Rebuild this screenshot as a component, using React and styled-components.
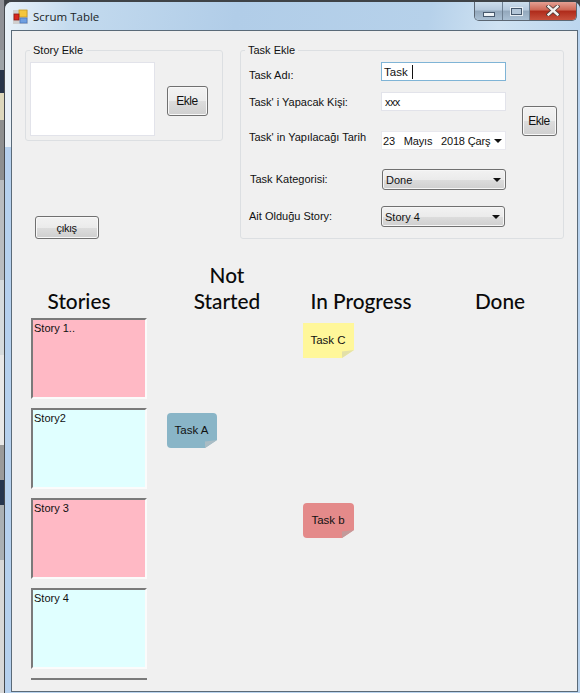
import React from "react";
import styled, { createGlobalStyle } from "styled-components";

const Global = createGlobalStyle`
  html, body { margin: 0; padding: 0; background: #f0f0f0; }
  body { width: 580px; height: 693px; overflow: hidden; font-family: "Liberation Sans", Arial, sans-serif; font-size: 11px; color: #111; }
  #root { height: 693px; }
`;

const Page = styled.div`
  display: flex;
  width: 580px;
  height: 693px;
  overflow: hidden;
  background: #3f4347;
`;
const DesktopEdge = styled.div`
  width: 4px;
  flex: none;
  border-right: 1px solid #45494e;
  background: linear-gradient(to bottom,
    #8f9196 0 50px, #9da3a8 50px 70px, #26344a 70px 93px, #ddd8bd 93px 120px, #8d8f90 120px 180px,
    #b9bcc0 180px 280px, #d6dbdd 280px 355px, #e8e8e8 355px 445px, #9a9a9a 445px 480px,
    #26364f 480px 505px, #aab0b4 505px 560px, #d8d8d8 560px 693px);
`;
const Win = styled.div`
  flex: 1;
  display: flex;
  flex-direction: column;
  margin-top: 2px;
  border-top-left-radius: 7px;
  border-top-right-radius: 7px;
  overflow: hidden;
  background: linear-gradient(to bottom, #e9f1f8 0 145px, #b5d0ee 145px) left top / 7px 100% no-repeat, #b9d3ee;
`;
const TitleBar = styled.div`
  height: 28px;
  flex: none;
  display: flex;
  align-items: flex-start;
  padding: 0 3px 0 8px;
  background: linear-gradient(100deg, #e9f2f9 0, #c3daee 70px, #b1cde8 230px, #b6d1ea 420px, #cfe2f2 490px, #bcd6ee 100%);
`;
const AppIcon = styled.svg`
  width: 15px;
  height: 15px;
  flex: none;
  margin-top: 7px;
`;
const Title = styled.span`
  margin: 6px 0 0 5px;
  font: 11.5px/17px "Open Sans", "Noto Sans", sans-serif;
  color: #1a1f26;
`;
const Controls = styled.div`
  display: flex;
  height: 19px;
  margin-left: auto;
  margin-top: -1px;
  border: 1px solid #5b6672;
  border-top: none;
  border-radius: 0 0 5px 5px;
  overflow: hidden;
`;
const Ctl = styled.div`
  width: ${(p) => p.$w}px;
  box-sizing: border-box;
  display: flex;
  align-items: center;
  justify-content: center;
  border-right: ${(p) => (p.$close ? "none" : "1px solid #6d7f91")};
  background: ${(p) =>
    p.$close
      ? "linear-gradient(to bottom, #e8a79b 0, #cf6a58 45%, #b02c1c 55%, #c7503c 100%)"
      : "linear-gradient(to bottom, #cfe0ee 0, #b6cadd 45%, #94a9bd 55%, #a9bfd3 100%)"};
`;
const MinGlyph = styled.i`
  display: block;
  width: 10px;
  height: 3px;
  margin-top: 7px;
  background: #eef3f7;
  border: 1px solid #46586c;
`;
const MaxGlyph = styled.i`
  display: block;
  width: 9px;
  height: 5px;
  margin-top: 1px;
  background: #b3c6d8;
  border: 1px solid #46586c;
  box-shadow: 0 0 0 1px #e6edf3;
`;
const CloseGlyph = styled.svg`
  width: 14px;
  height: 11px;
`;
const Client = styled.div`
  flex: 1;
  margin: 0 2px 1px 6px;
  border: 1px solid #5a6a78;
  background: #f0f0f0;
  min-height: 0;
`;
const TopArea = styled.div`
  display: flex;
  gap: 17px;
  padding: 13px 0 0 13px;
`;
const LeftColumn = styled.div`
  width: 198px;
  flex: none;
`;
const Group = styled.fieldset`
  margin: 0;
  min-width: 0;
  box-sizing: border-box;
  width: ${(p) => p.$w}px;
  height: ${(p) => p.$h}px;
  padding: 6px 4px 0 ${(p) => p.$pl}px;
  border: 1px solid #dcdfe2;
  border-radius: 3px;
`;
const Legend = styled.legend`
  margin-left: ${(p) => p.$ml}px;
  padding: 0 3px;
  height: 12px;
  font-size: 11px;
  line-height: 12px;
`;
const StoryRow = styled.div`
  display: flex;
  gap: 12px;
  align-items: flex-start;
`;
const TextArea = styled.div`
  width: 125px;
  height: 74px;
  box-sizing: border-box;
  background: #fff;
  border: 1px solid #e2e3ea;
`;
const Button = styled.div`
  width: ${(p) => p.$w}px;
  height: ${(p) => p.$h}px;
  flex: none;
  box-sizing: border-box;
  display: flex;
  align-items: center;
  justify-content: center;
  margin: ${(p) => p.$m || 0};
  padding-right: 1px;
  border: 1px solid #707070;
  border-radius: 3px;
  box-shadow: inset 0 0 0 1px #f8f8f8;
  background: linear-gradient(to bottom, #f2f2f2 0, #ebebeb 50%, #dddddd 50%, #cfcfcf 100%);
  font-size: ${(p) => p.$fs || 11}px;
  letter-spacing: -0.5px;
`;
const TaskBody = styled.div`
  display: flex;
  gap: 16px;
  align-items: flex-start;
`;
const Fields = styled.div`
  width: 257px;
  flex: none;
`;
const FormRow = styled.div`
  display: flex;
  align-items: flex-start;
  margin-top: ${(p) => p.$top}px;
  padding-left: ${(p) => p.$nudge || 0}px;
`;
const Label = styled.span`
  width: 132px;
  flex: none;
  margin-top: ${(p) => p.$dy}px;
  margin-bottom: -4px;
  font-size: 11px;
  line-height: 14px;
  white-space: nowrap;
`;
const TextField = styled.div`
  width: 125px;
  height: 19px;
  box-sizing: border-box;
  display: flex;
  align-items: center;
  padding-left: ${(p) => (p.$focus ? 2 : 3)}px;
  background: #fff;
  border: 1px solid ${(p) => (p.$focus ? "#7fb4d6" : "#e2e3ea")};
  font-size: ${(p) => (p.$focus ? 11.5 : 11)}px;
  white-space: pre;
  letter-spacing: ${(p) => (p.$focus ? 0 : -0.6)}px;
`;
const Caret = styled.i`
  display: block;
  width: 1px;
  height: 14px;
  margin-left: 1px;
  background: #111;
`;
const DateField = styled.div`
  width: 125px;
  height: 19px;
  box-sizing: border-box;
  display: flex;
  align-items: center;
  padding: 0 3px 0 1px;
  background: #fff;
  border: 1px solid #e8e8ee;
  font-size: 11px;
`;
const DateText = styled.span`
  flex: none;
  white-space: pre;
  letter-spacing: -0.15px;
`;
const Arrow = styled.i`
  display: block;
  flex: none;
  width: 0;
  height: 0;
  margin-left: auto;
  border-left: 4px solid transparent;
  border-right: 4px solid transparent;
  border-top: 4px solid #111;
`;
const Combo = styled.div`
  width: ${(p) => p.$w || 124}px;
  height: 21px;
  box-sizing: border-box;
  display: flex;
  align-items: center;
  padding: 0 4px 0 3px;
  border: 1px solid #707070;
  border-radius: 3px;
  box-shadow: inset 0 0 0 1px #f6f6f6;
  background: linear-gradient(to bottom, #f2f2f2 0, #ebebeb 50%, #dddddd 50%, #cfcfcf 100%);
  font-size: 11px;
`;
const HeadGrid = styled.div`
  display: grid;
  grid-template-columns: repeat(4, 136px);
  align-items: end;
  padding-left: 19px;
  margin-top: 23px;
`;
const ColHead = styled.div`
  width: ${(p) => p.$w}px;
  margin-left: ${(p) => p.$ml}px;
  font: 500 20.8px/26px "Lato", "DejaVu Sans", sans-serif;
  color: #0a0a0a;
  text-align: center;
  white-space: ${(p) => (p.$wrap ? "normal" : "nowrap")};
`;
const Board = styled.div`
  display: grid;
  grid-template-columns: repeat(4, 136px);
  grid-auto-rows: 81px;
  row-gap: 9px;
  padding-left: 19px;
  margin-top: 4px;
`;
const StoryCard = styled.div`
  width: 116px;
  height: 81px;
  box-sizing: border-box;
  grid-column: 1;
  padding: 2px 0 0 1px;
  background: ${(p) => p.$bg};
  border: 2px solid #7a7a7a;
  border-right-color: #fbfbfb;
  border-bottom-color: #fbfbfb;
  font-size: 11px;
  line-height: 13px;
`;
const StubCard = styled.div`
  width: 116px;
  height: 2px;
  grid-column: 1;
  background: #7a7a7a;
`;
const Note = styled.div`
  position: relative;
  grid-column: ${(p) => p.$col};
  grid-row: ${(p) => p.$row};
  align-self: start;
  box-sizing: border-box;
  width: ${(p) => p.$w}px;
  height: 35px;
  margin-top: 5px;
  padding: 10px 1px 0 0;
  text-align: center;
  font-size: 11.5px;
  line-height: 14px;
  background: ${(p) => p.$bg};
  border-radius: ${(p) => (p.$sharp ? "0" : "4px")};

  &::before {
    content: "";
    position: absolute;
    right: 0;
    bottom: 0;
    width: 12px;
    height: 8px;
    background: #f0f0f0;
    clip-path: polygon(100% 0, 100% 100%, 0 100%);
  }
  &::after {
    content: "";
    position: absolute;
    right: 0;
    bottom: 0;
    width: 12px;
    height: 8px;
    background: ${(p) => p.$fold};
    clip-path: polygon(100% 0, 0 100%, 0 20%);
  }
`;

const stories = [
  ["Story 1..", "#ffb9c5"],
  ["Story2", "#e0ffff"],
  ["Story 3", "#ffb9c5"],
  ["Story 4", "#e0ffff"],
];

export default function App() {
  return (
    <Page>
      <Global />
      <DesktopEdge />
      <Win>
        <TitleBar>
          <AppIcon viewBox="0 0 15 15">
            <rect x="0" y="1" width="15" height="14" fill="#cfcfcf" />
            <rect x="6" y="1" width="8" height="7" fill="#f4c63c" stroke="#c89a20" strokeWidth="0.8" />
            <rect x="7" y="9" width="7" height="5" fill="#6f9fe0" stroke="#4a78bd" strokeWidth="0.8" />
            <rect x="1" y="5" width="5" height="6" fill="#d9261c" stroke="#8c1a14" strokeWidth="0.8" />
          </AppIcon>
          <Title>Scrum Table</Title>
          <Controls>
            <Ctl $w={28}><MinGlyph /></Ctl>
            <Ctl $w={27}><MaxGlyph /></Ctl>
            <Ctl $w={46} $close>
              <CloseGlyph viewBox="0 0 14 11">
                <path d="M2.5 1.5 L11.5 9.5 M11.5 1.5 L2.5 9.5" stroke="#4d3a38" strokeWidth="4" strokeLinecap="square" />
                <path d="M2.5 1.5 L11.5 9.5 M11.5 1.5 L2.5 9.5" stroke="#f4f1ee" strokeWidth="2.4" strokeLinecap="square" />
              </CloseGlyph>
            </Ctl>
          </Controls>
        </TitleBar>
        <Client>
          <TopArea>
            <LeftColumn>
              <Group $w={198} $h={97} $pl={4}>
                <Legend $ml={0}>Story Ekle</Legend>
                <StoryRow>
                  <TextArea />
                  <Button $w={41} $h={30} $m="24px 0 0 0" $fs={12}>Ekle</Button>
                </StoryRow>
              </Group>
              <Button $w={64} $h={23} $m="75px 0 0 10px">çıkış</Button>
            </LeftColumn>
            <Group $w={324} $h={195} $pl={8}>
              <Legend $ml={-4}>Task Ekle</Legend>
              <TaskBody>
                <Fields>
                  <FormRow $top={0}>
                    <Label $dy={6}>Task Adı:</Label>
                    <TextField $focus>Task <Caret /></TextField>
                  </FormRow>
                  <FormRow $top={11}>
                    <Label $dy={3}>Task' i Yapacak Kişi:</Label>
                    <TextField>xxx</TextField>
                  </FormRow>
                  <FormRow $top={20}>
                    <Label $dy={-1}>Task' in Yapılacağı Tarih</Label>
                    <DateField>
                      <DateText>{"23   Mayıs   2018 Çarş"}</DateText>
                      <Arrow />
                    </DateField>
                  </FormRow>
                  <FormRow $top={19} $nudge={1}>
                    <Label $dy={3}>Task Kategorisi:</Label>
                    <Combo>Done<Arrow /></Combo>
                  </FormRow>
                  <FormRow $top={16}>
                    <Label $dy={3}>Ait Olduğu Story:</Label>
                    <Combo>Story 4<Arrow /></Combo>
                  </FormRow>
                </Fields>
                <Button $w={35} $h={30} $m="44px 0 0 0" $fs={12}>Ekle</Button>
              </TaskBody>
            </Group>
          </TopArea>
          <HeadGrid>
            <ColHead $w={96} $ml={0}>Stories</ColHead>
            <ColHead $w={100} $ml={10} $wrap>Not Started</ColHead>
            <ColHead $w={116} $ml={0}>In Progress</ColHead>
            <ColHead $w={100} $ml={11}>Done</ColHead>
          </HeadGrid>
          <Board>
            {stories.map(([text, bg]) => (
              <StoryCard key={text} $bg={bg}>{text}</StoryCard>
            ))}
            <StubCard />
            <Note $col={3} $row={1} $w={51} $bg="#fff79a" $fold="#e3e0a8" $sharp>Task C</Note>
            <Note $col={2} $row={2} $w={50} $bg="#89b5c7" $fold="#aabcc4">Task A</Note>
            <Note $col={3} $row={3} $w={51} $bg="#e48a8a" $fold="#c39a9a">Task b</Note>
          </Board>
        </Client>
      </Win>
    </Page>
  );
}
